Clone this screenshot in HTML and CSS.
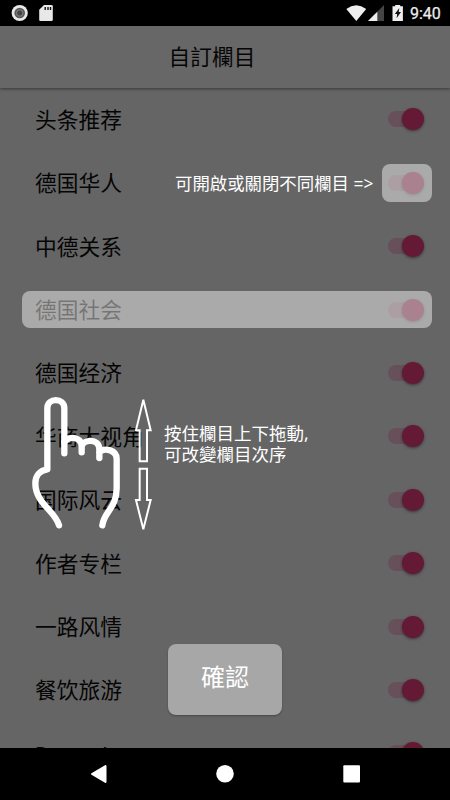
FILE: index.html
```html
<!DOCTYPE html>
<html lang="zh">
<head>
<meta charset="utf-8">
<title>自訂欄目</title>
<link rel="stylesheet" href="styles.css">
</head>
<body>
<div class="phone">
  <div class="status">
    <svg class="status-left" viewBox="0 0 60 26">
      <circle cx="19.7" cy="13" r="8.1" fill="#e8e8e8"/><circle cx="19.7" cy="13" r="5.3" fill="#555"/><circle cx="19.7" cy="13" r="3.8" fill="#777"/><circle cx="19.7" cy="13" r="2.5" fill="#444"/>
      <path d="M44 5h7.5q1.3 0 1.3 1.3v13.4q0 1.3-1.3 1.3h-11q-1.3 0-1.3-1.3V9.8z" fill="#e8e8e8"/>
      <path d="M45.2 7v3M48 7v3M50.5 7v3" stroke="#111" stroke-width="1.4"/>
    </svg>
    <svg class="status-right" viewBox="340 0 70 26">
      <path d="M346.3 8.9Q356.2 1.5 366.2 8.9L356.3 21z" fill="#eee"/>
      <path d="M368 21L384 5v16z" fill="#444"/><path d="M368 21l9.3-9.3V21z" fill="#eee"/>
      <path d="M392.5 6.2h2.7V5h5v1.2h2.7V21h-10.4z" fill="#eee"/>
      <path d="M399.3 8l-4.5 6h2.4l-.6 4.3 4.4-6.2h-2.3z" fill="#111"/>
    </svg>
    <span class="clock">9:40</span>
  </div>
  <header class="title">自訂欄目</header>
  <main class="list">
    <div class="row"><span>头条推荐</span><i class="switch"></i></div>
    <div class="row"><span>德国华人</span><i class="switch"></i></div>
    <div class="row"><span>中德关系</span><i class="switch"></i></div>
    <div class="row"><span>德国社会</span><i class="switch"></i></div>
    <div class="row"><span>德国经济</span><i class="switch"></i></div>
    <div class="row"><span>华商大视角</span><i class="switch"></i></div>
    <div class="row"><span>国际风云</span><i class="switch"></i></div>
    <div class="row"><span>作者专栏</span><i class="switch"></i></div>
    <div class="row"><span>一路风情</span><i class="switch"></i></div>
    <div class="row"><span>餐饮旅游</span><i class="switch"></i></div>
    <div class="row"><span class="latin">Deutsch</span><i class="switch"></i></div>
  </main>
  <nav class="nav">
    <svg viewBox="0 748 450 52">
      <path d="M92 774L105.5 766V782z" fill="#fff" stroke="#fff" stroke-width="2" stroke-linejoin="round"/>
      <circle cx="225" cy="773.7" r="8.8" fill="#fff"/>
      <rect x="343.3" y="765.3" width="16.7" height="17.2" rx="1" fill="#fff"/>
    </svg>
  </nav>
  <div class="spot spot-switch"></div>
  <div class="spot spot-row"></div>
  <p class="hint hint-switch">可開啟或關閉不同欄目 =&gt;</p>
  <p class="hint hint-drag">按住欄目上下拖動,<br>可改變欄目次序</p>
  <svg class="gesture" viewBox="0 0 420 465" fill="none" stroke="#fff">
    <g stroke-width="19" stroke-linecap="round" stroke-linejoin="round">
      <path d="M117 421C106 378 46 355 46 295C46 272 60 256 82 253V70C82 37 133 37 133 70V205"/>
      <path d="M133 171C145 152 185 154 185 184V202M185 184C192 161 238 160 238 193V219M238 202C250 187 290 193 290 222V310C290 370 252 379 247 421"/>
    </g>
    <path d="M370 44L392 136H381V229H359V136H348zM359 251H381V345H392L370 433L348 345H359z" stroke-width="6"/>
  </svg>
  <button class="confirm">確認</button>
</div>
</body>
</html>
```

FILE: styles.css
```css
* { box-sizing: border-box; }
body { margin: 0; background: #000; }
.phone {
  position: relative;
  display: flex;
  flex-direction: column;
  width: 450px;
  height: 800px;
  overflow: hidden;
  background: #656565;
  color: #050505;
  font-family: Roboto, "Noto Sans CJK SC", sans-serif;
}
.status {
  display: flex;
  flex: none;
  height: 26px;
  background: #000;
}
.status-left { width: 60px; height: 26px; }
.status-right { width: 70px; height: 26px; margin-left: auto; }
.clock {
  width: 40px;
  color: #eee;
  font-size: 16px;
  font-weight: 400;
  -webkit-text-stroke: .25px #eee;
  line-height: 28px;
}
.title {
  flex: none;
  height: 62px;
  padding: 1px 26px 0 0;
  background: #676767;
  box-shadow: 0 1px 3px rgba(0, 0, 0, .45);
  font-family: Roboto, "Noto Sans CJK TC", sans-serif;
  font-size: 21.7px;
  line-height: 62px;
  text-align: center;
}
.list {
  flex: 1;
  min-height: 0;
  overflow: hidden;
}
.row {
  display: flex;
  align-items: center;
  justify-content: space-between;
  height: 63.4px;
  padding: 0 26px .6px 35px;
  font-size: 21.75px;
}
.row span { padding-bottom: 2px; }
.row .latin { padding: 5px 0 0; }
.switch {
  position: relative;
  width: 36px;
  height: 22px;
}
.switch::before, .switch::after {
  content: "";
  position: absolute;
}
.switch::before {
  left: 0;
  top: 3px;
  width: 34px;
  height: 16px;
  border-radius: 8px;
  background: #67505a;
}
.switch::after {
  right: 0;
  top: 0;
  width: 22px;
  height: 22px;
  border-radius: 50%;
  background: #641a34;
  box-shadow: 0 1px 3px rgba(0, 0, 0, .45);
}
.nav { flex: none; height: 52px; background: #000; }
.nav svg { display: block; width: 450px; height: 52px; }
.spot {
  position: absolute;
  border-radius: 8px;
  background: rgba(255, 255, 255, .45);
}
.spot-switch { left: 382px; top: 164px; width: 49.5px; height: 37.5px; }
.spot-row { left: 22px; top: 290.5px; width: 409.5px; height: 37.5px; }
.hint {
  position: absolute;
  margin: 0;
  color: #fff;
  font-family: "Noto Sans", "Noto Sans CJK TC", sans-serif;
  font-size: 17.4px;
  line-height: 20.5px;
  white-space: nowrap;
}
.hint-switch { left: 175px; top: 173px; }
.hint-drag { left: 164px; top: 423px; font-size: 17.5px; }
.gesture {
  position: absolute;
  left: 20px;
  top: 385px;
  width: 140px;
  height: 155px;
}
.confirm {
  position: absolute;
  left: 168px;
  top: 644px;
  width: 114px;
  height: 71px;
  padding: 0 0 9px;
  border: 0;
  border-radius: 8px;
  background: #a7a7a7;
  box-shadow: 0 1px 2px rgba(0, 0, 0, .3);
  color: #fff;
  font-family: Roboto, "Noto Sans CJK TC", sans-serif;
  font-size: 24px;
}
```
